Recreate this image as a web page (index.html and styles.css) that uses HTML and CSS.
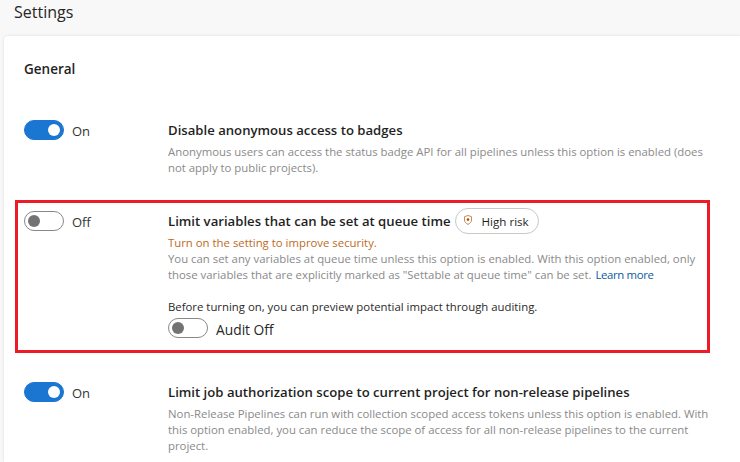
FILE: index.html
```html
<!DOCTYPE html>
<html lang="en">
<head>
<meta charset="utf-8">
<title>Settings</title>
<link rel="stylesheet" href="styles.css">
</head>
<body>
<h1 class="page-title">Settings</h1>
<main class="card">
  <h2 class="section-title">General</h2>
  <section class="row row-first">
    <div class="switch-col">
      <span class="switch switch-on"><span class="knob"></span></span>
      <span class="switch-label">On</span>
    </div>
    <div class="body-col">
      <div class="title-line"><span class="row-title">Disable anonymous access to badges</span></div>
      <p class="desc">Anonymous users can access the status badge API for all pipelines unless this option is enabled (does<br>not apply to public projects).</p>
    </div>
  </section>
  <section class="row row-flagged">
    <div class="switch-col">
      <span class="switch"><span class="knob"></span></span>
      <span class="switch-label">Off</span>
    </div>
    <div class="body-col">
      <div class="title-line">
        <span class="row-title">Limit variables that can be set at queue time</span>
        <span class="pill">
          <svg class="shield" viewBox="0 0 12 12" width="12" height="12" aria-hidden="true">
            <path d="M6 1.500 9.500 2.700V6c0 2.100-1.600 3.500-3.500 4.400C4.100 9.500 2.500 8.100 2.500 6V2.700Z" fill="none" stroke="#ca8a4a" stroke-width="1"/>
            <circle cx="6" cy="5.600" r="1.300" fill="#b4451f"/>
          </svg>
          High risk
        </span>
      </div>
      <p class="warn">Turn on the setting to improve security.</p>
      <p class="desc">You can set any variables at queue time unless this option is enabled. With this option enabled, only<br>those variables that are explicitly marked as "Settable at queue time" can be set. <a class="link" href="#">Learn more</a></p>
      <p class="audit-note">Before turning on, you can preview potential impact through auditing.</p>
      <div class="audit">
        <span class="switch"><span class="knob"></span></span>
        <span class="audit-label">Audit Off</span>
      </div>
    </div>
  </section>
  <section class="row row-last">
    <div class="switch-col">
      <span class="switch switch-on"><span class="knob"></span></span>
      <span class="switch-label">On</span>
    </div>
    <div class="body-col">
      <div class="title-line"><span class="row-title">Limit job authorization scope to current project for non-release pipelines</span></div>
      <p class="desc">Non-Release Pipelines can run with collection scoped access tokens unless this option is enabled. With<br>this option enabled, you can reduce the scope of access for all non-release pipelines to the current<br>project.</p>
    </div>
  </section>
</main>
</body>
</html>
```

FILE: styles.css
```css
* { box-sizing: border-box; }
html, body { margin: 0; height: 100%; overflow: hidden; }
body {
  background: #f8f8f8;
  font-family: "Open Sans", "Noto Sans", sans-serif;
  color: #201f1e;
  padding: 0 0 0 4px;
}
.page-title {
  margin: 0;
  padding: 0 0 0 10px;
  height: 36px;
  font-size: 16px;
  line-height: 24px;
  font-weight: 400;
  color: #262626;
}
.card {
  background: #fff;
  border-radius: 4px 0 0 0;
  box-shadow: 0 0 3px rgba(0,0,0,.12);
  padding: 21px 0 0 0;
  height: 426px;
}
.section-title {
  margin: 0 0 0 20px;
  font-size: 13.500px;
  line-height: 24px;
  font-weight: 600;
  color: #1f1f1f;
  height: 63px;
}
.row { display: flex; }
.row-first { padding-left: 20px; height: 80px; }
.row-flagged {
  margin-left: 11px;
  width: 695px;
  height: 153px;
  border: 3px solid #ed1c24;
  padding: 8px 0 0 6px;
}
.row-last { padding-left: 20px; margin-top: 29px; }
.switch-col { width: 144px; flex: none; display: flex; align-items: center; gap: 8px; height: 20px; }
.switch {
  width: 40px; height: 20px; border-radius: 10px;
  border: 1px solid #8a8886; background: #fff;
  display: flex; align-items: center; padding: 0 3px; flex: none;
}
.knob { width: 12px; height: 12px; border-radius: 50%; background: #737373; }
.switch-on { background: #1b76d2; border-color: #1b76d2; justify-content: flex-end; }
.switch-on .knob { background: #fff; }
.switch-label { font-size: 13px; line-height: 20px; color: #333; padding-top: 1px; }
.body-col { flex: 1; }
.title-line { display: flex; align-items: center; height: 20px; }
.row-title { font-size: 13.150px; font-weight: 600; color: #1f1f1f; white-space: nowrap; }
.pill {
  display: inline-flex; align-items: center; gap: 8px;
  height: 26px; margin-left: 4px; padding: 0 9px 0 6px;
  border: 1px solid #c8c8c8; border-radius: 13px;
  font-size: 11.600px; color: #1f1f1f;
}
.shield { flex: none; margin-top: -3px; }
p { margin: 0; font-size: 11.370px; line-height: 16px; white-space: nowrap; }
.desc { color: #8a8a8a; margin-top: 4px; }
.warn { color: #bd6b1e; margin-top: 4px; }
.warn + .desc { margin-top: 0; }
.link { color: #0b5a9e; text-decoration: none; margin-left: 1px; letter-spacing: -.35px; }
.audit-note { color: #2a2a2a; margin-top: 16px; }
.audit { display: flex; align-items: center; gap: 8px; margin-top: 3px; height: 20px; }
.audit-label { font-size: 13.800px; color: #262626; padding-top: 2px; }
```
